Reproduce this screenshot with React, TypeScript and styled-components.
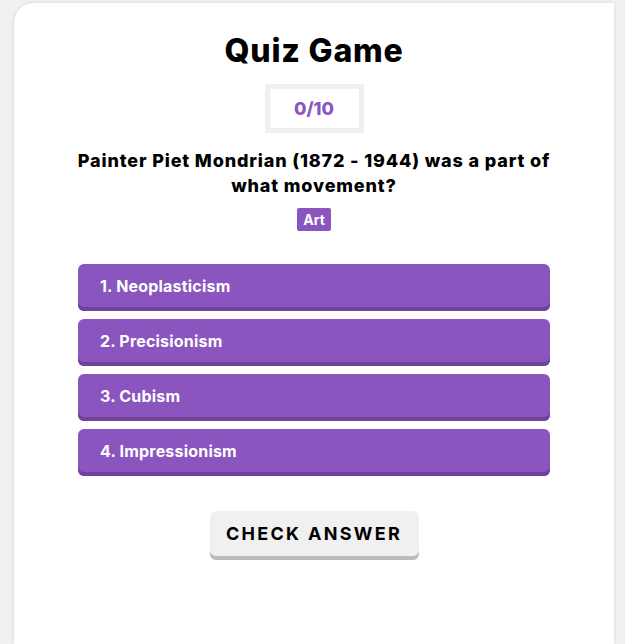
import React, { useState } from "react";
import styled, { createGlobalStyle } from "styled-components";

const GlobalStyle = createGlobalStyle`
  html, body {
    margin: 0;
    padding: 0;
    background: #f1f1f1;
  }
  body {
    font-family: Inter, "Noto Sans", sans-serif;
  }
`;

const Page = styled.div`
  padding: 3px 11px 0 14px;
  min-height: 100vh;
  box-sizing: border-box;
`;

const Card = styled.div`
  background: #ffffff;
  border-top-left-radius: 20px;
  box-shadow: 0 0 4px rgba(0, 0, 0, 0.12);
  min-height: calc(100vh - 3px);
  display: flex;
  flex-direction: column;
  align-items: center;
  padding-top: 28px;
  box-sizing: border-box;
`;

const Title = styled.h1`
  margin: 0;
  font-size: 32px;
  line-height: 40px;
  font-weight: 800;
  letter-spacing: 0.8px;
  color: #000;
`;

const Score = styled.div`
  margin-top: 13px;
  width: 99px;
  height: 49px;
  box-sizing: border-box;
  border: 5px solid #f0f0f0;
  display: flex;
  align-items: center;
  justify-content: center;
  color: #8a55bf;
  font-size: 18px;
  font-weight: 800;
`;

const Question = styled.h2`
  margin: 15px 0 0;
  width: 480px;
  text-align: center;
  font-size: 18px;
  line-height: 25px;
  font-weight: 800;
  letter-spacing: 0.85px;
  color: #000;
`;

const Tag = styled.span`
  margin-top: 10px;
  background: #8a55bf;
  color: #fff;
  font-size: 14px;
  font-weight: 700;
  line-height: 23px;
  padding: 0 6px;
  border-radius: 2px;
`;

const Answers = styled.div`
  margin-top: 33px;
  width: 472px;
  display: flex;
  flex-direction: column;
  gap: 8px;
`;

const Answer = styled.button<{ $picked: boolean }>`
  height: 47px;
  border: none;
  border-radius: 6px;
  background: ${(p) => (p.$picked ? "#6f3fa3" : "#8a55bf")};
  box-shadow: inset 0 -4px 0 #6e4399;
  color: #fff;
  font-family: inherit;
  font-size: 16px;
  font-weight: 700;
  letter-spacing: 0.2px;
  text-align: left;
  padding: 0 22px 4px;
  cursor: pointer;
`;

const CheckButton = styled.button`
  margin-top: 35px;
  width: 209px;
  height: 49px;
  border: none;
  border-radius: 6px;
  background: #f0f0f0;
  box-shadow: inset 0 -4px 0 #bcbcbc;
  color: #000;
  font-family: inherit;
  font-size: 18px;
  font-weight: 700;
  letter-spacing: 2.3px;
  padding: 0 0 4px;
  cursor: pointer;
`;

const answers = ["Neoplasticism", "Precisionism", "Cubism", "Impressionism"];

const App: React.FC = () => {
  const [picked, setPicked] = useState<number | null>(null);

  return (
    <>
      <GlobalStyle />
      <Page>
        <Card>
          <Title>Quiz Game</Title>
          <Score>0/10</Score>
          <Question>
            Painter Piet Mondrian (1872 - 1944) was a part of what movement?
          </Question>
          <Tag>Art</Tag>
          <Answers>
            {answers.map((a, i) => (
              <Answer key={a} $picked={picked === i} onClick={() => setPicked(i)}>
                {i + 1}. {a}
              </Answer>
            ))}
          </Answers>
          <CheckButton>CHECK ANSWER</CheckButton>
        </Card>
      </Page>
    </>
  );
};

export default App;
